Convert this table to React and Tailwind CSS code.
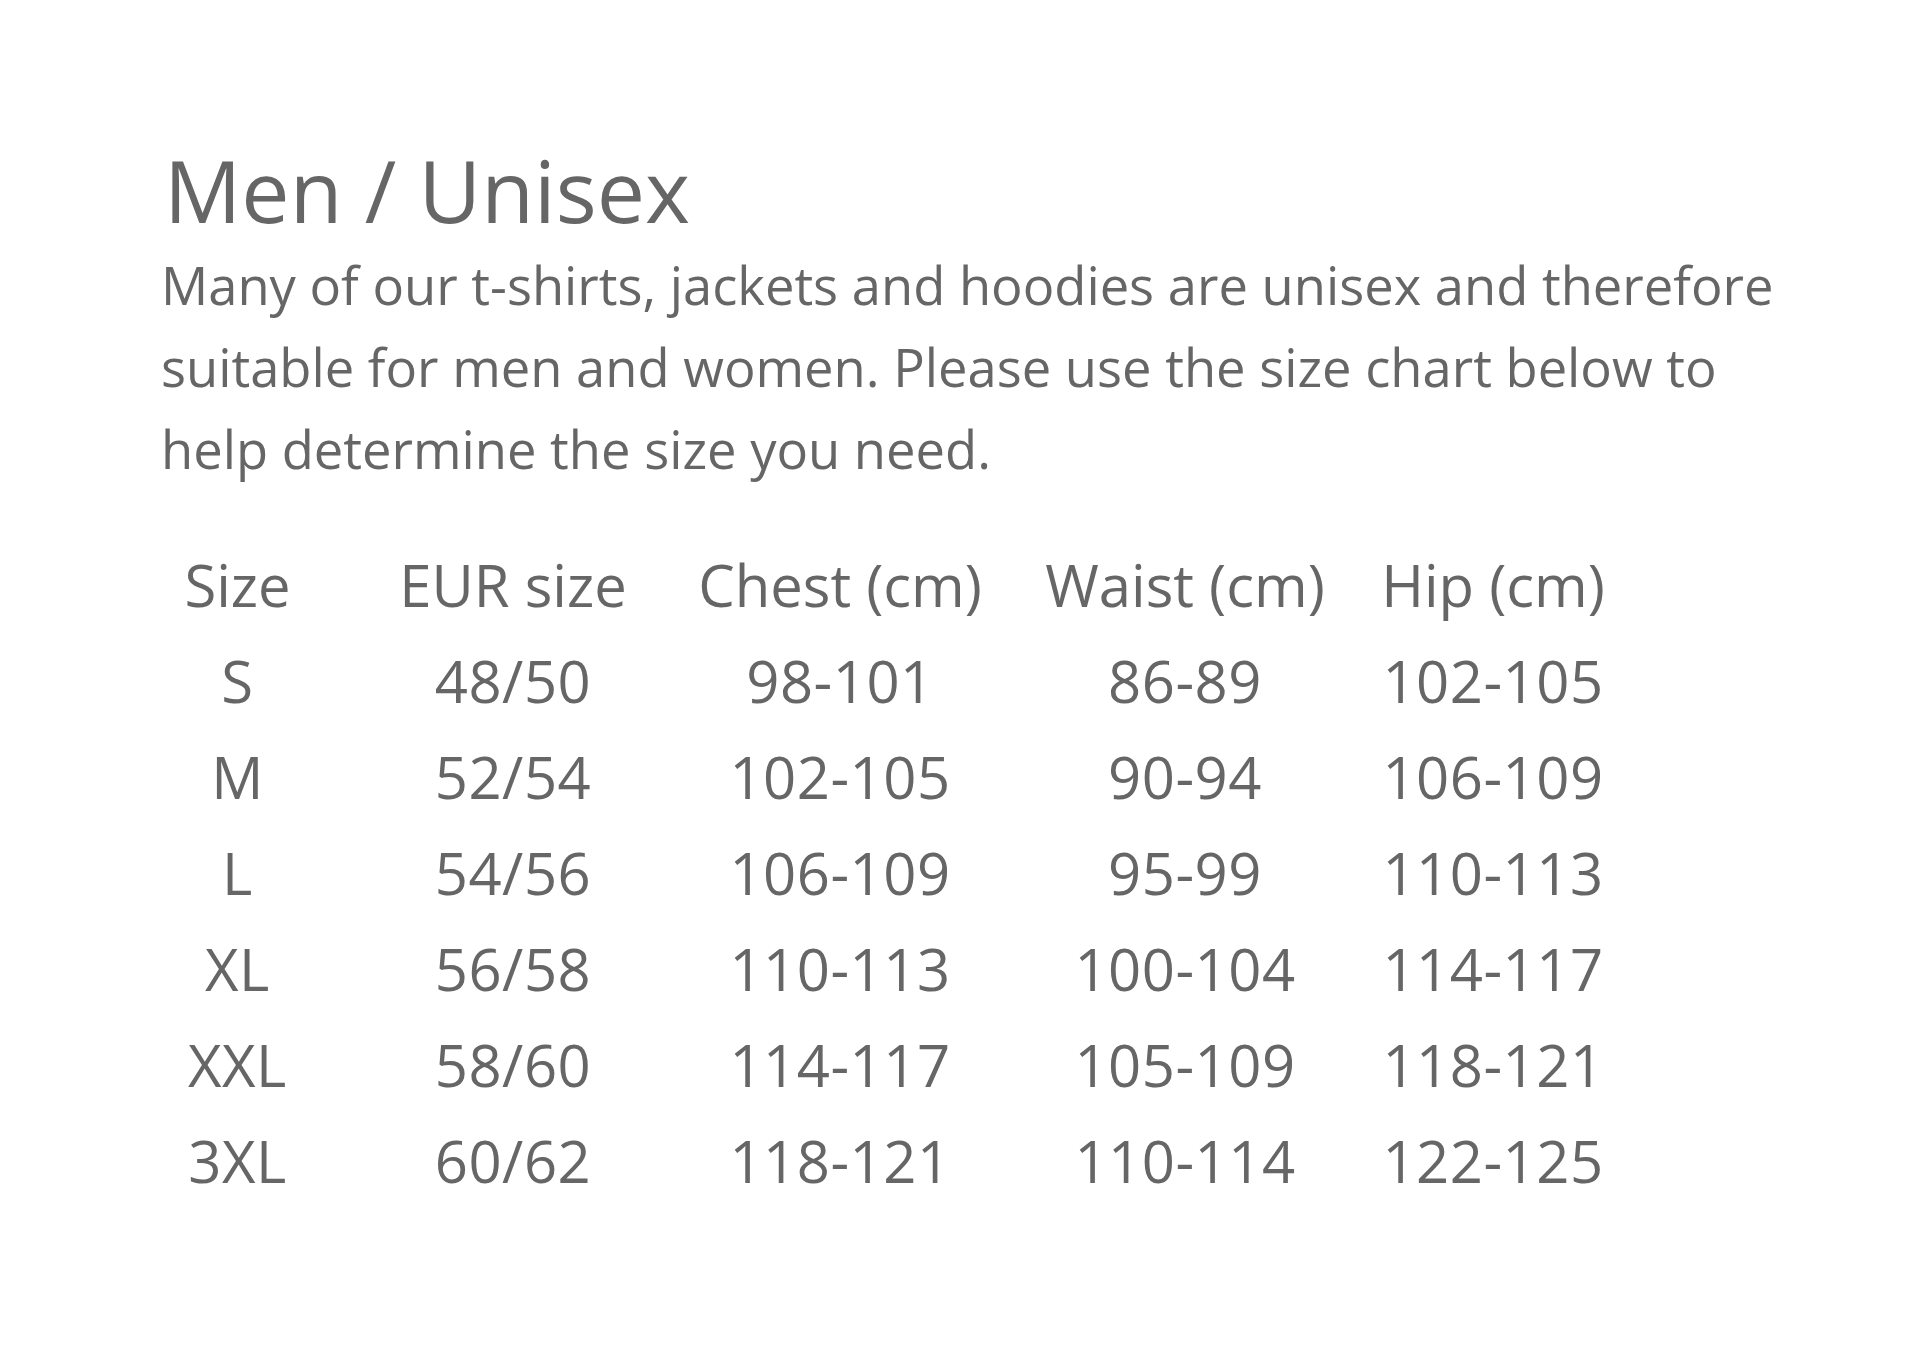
import React from "react";

const headers = ["Size", "EUR size", "Chest (cm)", "Waist (cm)", "Hip (cm)"];

const rows = [
  ["S", "48/50", "98-101", "86-89", "102-105"],
  ["M", "52/54", "102-105", "90-94", "106-109"],
  ["L", "54/56", "106-109", "95-99", "110-113"],
  ["XL", "56/58", "110-113", "100-104", "114-117"],
  ["XXL", "58/60", "114-117", "105-109", "118-121"],
  ["3XL", "60/62", "118-121", "110-114", "122-125"],
];

const SizeChart = () => {
  return (
    <div
      className="min-h-screen bg-white text-[#666666] pt-[147px] pl-[161px]"
      style={{ fontFamily: '"Open Sans", "Noto Sans", sans-serif' }}
    >
      <h1 className="ml-[3px] text-[86px] leading-none font-normal">Men / Unisex</h1>
      <p className="mt-[11px] w-[1660px] text-[52.5px] leading-[82px]">
        Many of our t-shirts, jackets and hoodies are unisex and therefore
        suitable for men and women. Please use the size chart below to help
        determine the size you need.
      </p>

      {/* size table */}
      <div className="mt-[47px] -ml-[21px] grid grid-cols-[195px_356px_298px_392px_224px] justify-items-center text-[58px] leading-[96px]">
        {headers.map((h) => (
          <div key={h} className="whitespace-nowrap">
            {h}
          </div>
        ))}
        {rows.map((row) =>
          row.map((cell, i) => (
            <div key={row[0] + i} className="whitespace-nowrap tracking-[0.5px]">
              {cell}
            </div>
          ))
        )}
      </div>
    </div>
  );
};

export default SizeChart;
